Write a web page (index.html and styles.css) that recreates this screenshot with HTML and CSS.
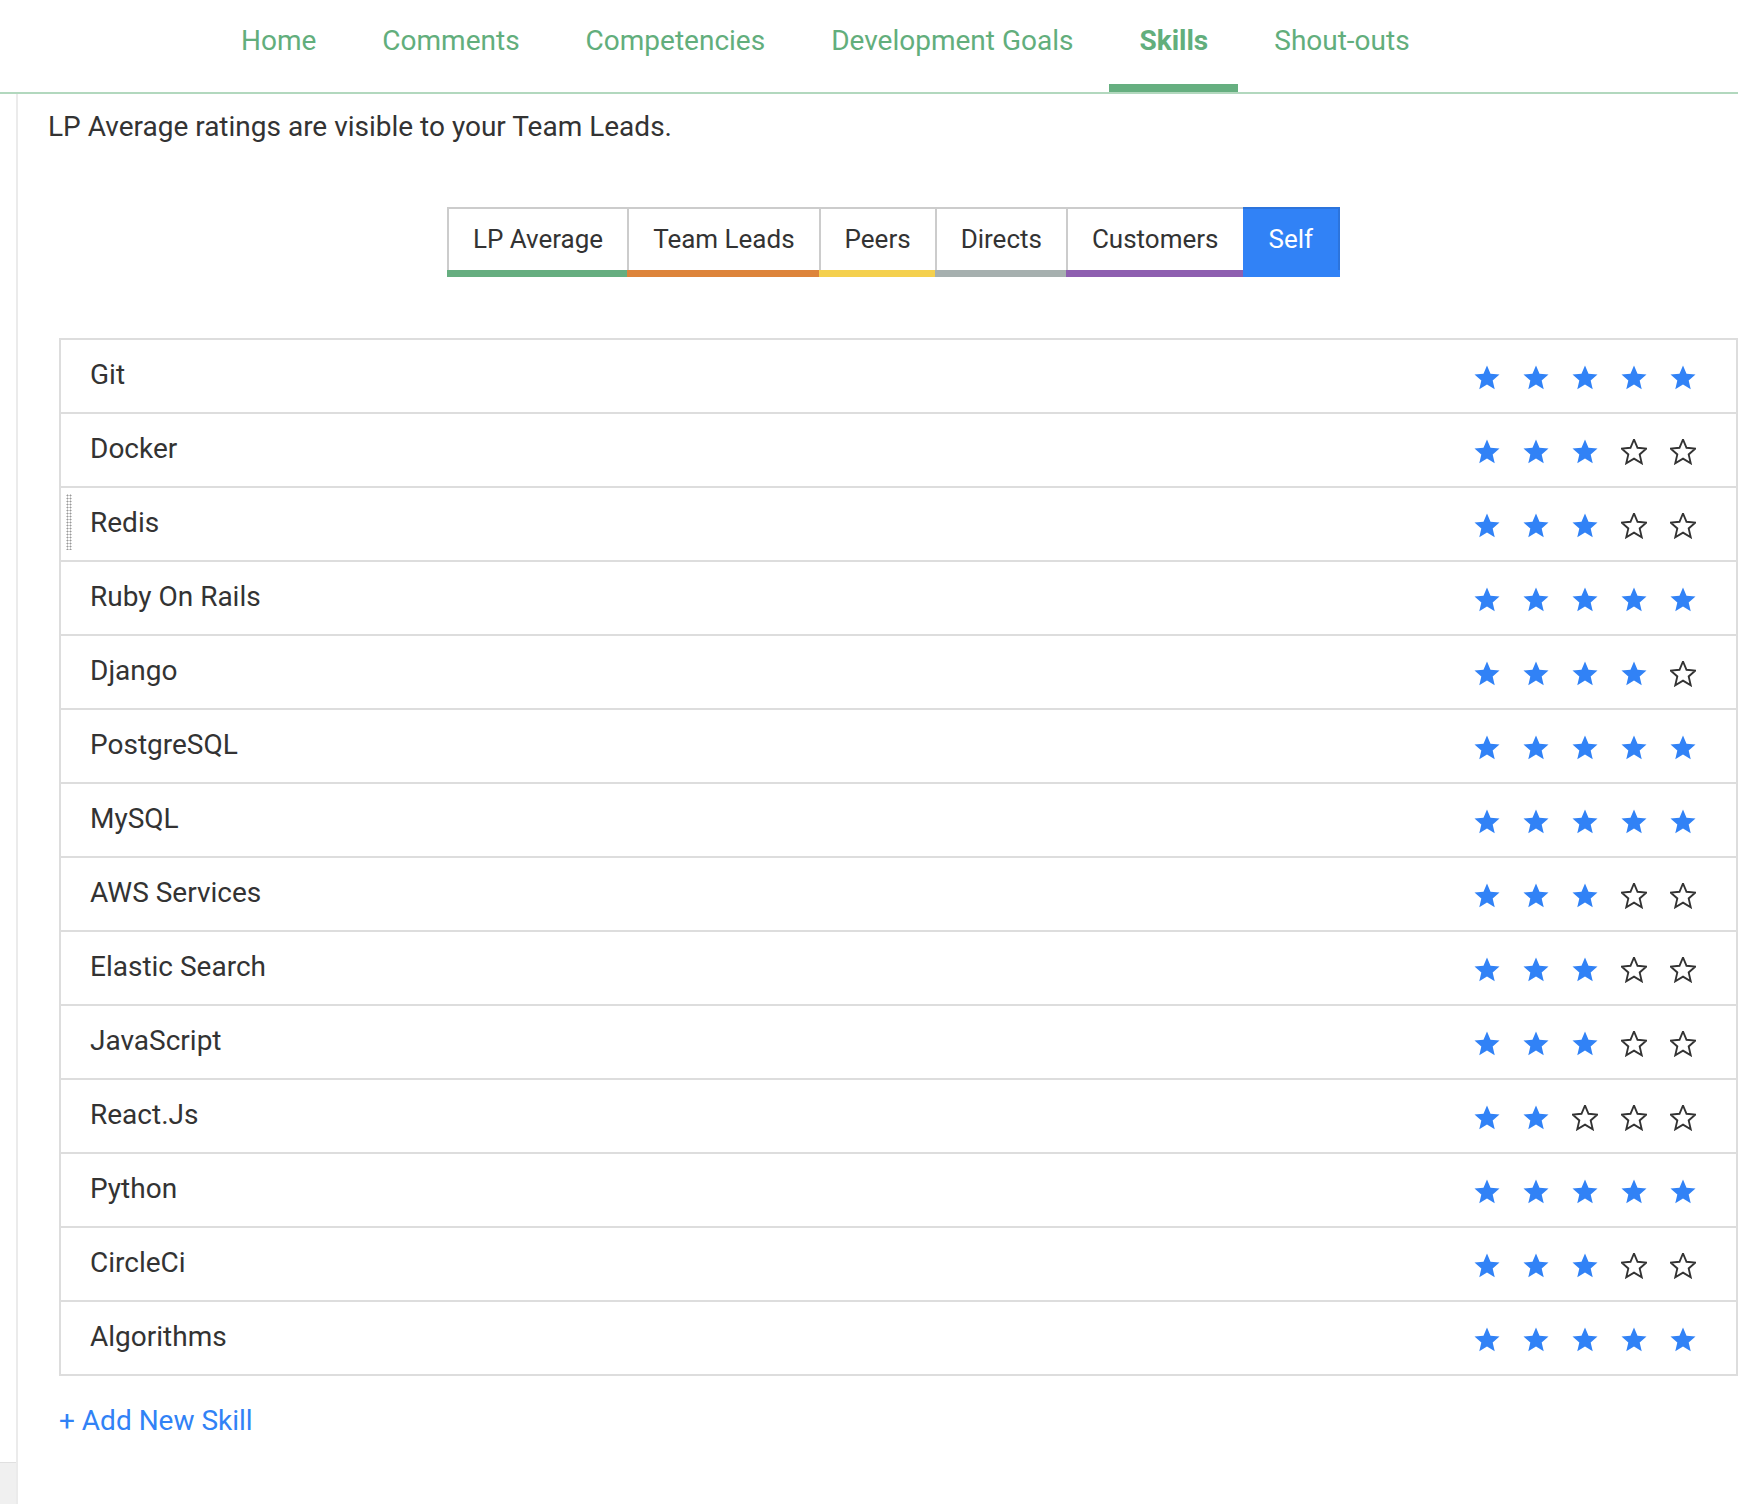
FILE: index.html
```html
<!DOCTYPE html>
<html lang="en">
<head>
<meta charset="utf-8">
<title>Skills</title>
<link rel="stylesheet" href="styles.css">
</head>
<body>
<svg class="defs" width="0" height="0" aria-hidden="true">
  <symbol id="star-full" viewBox="1.6 1.6 20.8 20.8">
    <path d="M12 17.27L18.18 21l-1.64-7.03L22 9.24l-7.19-.61L12 2 9.19 8.63 2 9.24l5.46 4.73L5.82 21z" fill="#3182f6"/>
  </symbol>
  <symbol id="star-empty" viewBox="1.6 1.6 20.8 20.8">
    <path d="M12 17.27L18.18 21l-1.64-7.03L22 9.24l-7.19-.61L12 2 9.19 8.63 2 9.24l5.46 4.73L5.82 21z" fill="none" stroke="#333" stroke-width="1.5" stroke-linejoin="miter"/>
  </symbol>
</svg>

<header class="topnav">
  <nav class="navlist">
    <a class="navitem">Home</a>
    <a class="navitem">Comments</a>
    <a class="navitem">Competencies</a>
    <a class="navitem">Development Goals</a>
    <a class="navitem active">Skills</a>
    <a class="navitem">Shout-outs</a>
  </nav>
</header>

<div class="page">
  <aside class="rail">
    <div class="rail-fill"></div>
    <div class="rail-foot"></div>
  </aside>
  <main class="content">
    <p class="notice">LP Average ratings are visible to your Team Leads.</p>
    <div class="board">
      <div class="seg-wrap">
        <div class="seg">
          <div class="seg-tab c-green"><span class="seg-label">LP Average</span><span class="seg-bar"></span></div>
          <div class="seg-tab c-orange"><span class="seg-label">Team Leads</span><span class="seg-bar"></span></div>
          <div class="seg-tab c-yellow"><span class="seg-label">Peers</span><span class="seg-bar"></span></div>
          <div class="seg-tab c-gray"><span class="seg-label">Directs</span><span class="seg-bar"></span></div>
          <div class="seg-tab c-purple"><span class="seg-label">Customers</span><span class="seg-bar"></span></div>
          <div class="seg-tab self"><span class="seg-label">Self</span><span class="seg-bar"></span></div>
        </div>
      </div>

      <div class="skills" id="skills"></div>

      <a class="add">+ Add New Skill</a>
    </div>
  </main>
</div>
<script src="app.js"></script>
</body>
</html>
```

FILE: app.js
```js
(function () {
  var data = [
    ["Git", 5], ["Docker", 3], ["Redis", 3], ["Ruby On Rails", 5],
    ["Django", 4], ["PostgreSQL", 5], ["MySQL", 5], ["AWS Services", 3],
    ["Elastic Search", 3], ["JavaScript", 3], ["React.Js", 2], ["Python", 5],
    ["CircleCi", 3], ["Algorithms", 5]
  ];
  var host = document.getElementById("skills");
  var html = "";
  data.forEach(function (d, i) {
    var stars = "";
    for (var s = 1; s <= 5; s++) {
      stars += '<svg class="star" width="26" height="26"><use href="#' + (s <= d[1] ? "star-full" : "star-empty") + '"/></svg>';
    }
    html += '<div class="skill-row">' +
      (i === 2 ? '<span class="drag"></span>' : '') +
      '<span class="skill-name">' + d[0] + '</span>' +
      '<span class="stars">' + stars + '</span></div>';
  });
  host.innerHTML = html;
})();
```

FILE: styles.css
```css
* { box-sizing: border-box; }
html, body { margin: 0; padding: 0; }
body {
  font-family: Roboto, "Noto Sans", "Liberation Sans", sans-serif;
  color: #333;
  background: #fff;
  width: 1738px;
  overflow: hidden;
}
.defs { position: absolute; width: 0; height: 0; overflow: hidden; }

.topnav {
  height: 94px;
  border-bottom: 2px solid #b2d8be;
}
.navlist {
  display: flex;
  gap: 6px;
  padding-left: 211px;
  height: 92px;
}
.navitem {
  display: block;
  padding: 0 30px;
  font-size: 28px;
  line-height: 82px;
  color: #62ae7c;
  height: 92px;
  border-bottom: 8px solid transparent;
}
.navitem.active {
  font-weight: 700;
  border-bottom-color: #66af80;
}

.page {
  display: flex;
  min-height: 1410px;
}
.rail {
  width: 18px;
  border-right: 2px solid #ebebeb;
  display: flex;
  flex-direction: column;
}
.rail-fill { flex: 1; }
.rail-foot {
  height: 42px;
  background: #f0f0f0;
  border-top: 1px solid #e0e0e0;
}
.content {
  flex: 1;
}
.notice {
  margin: 17px 0 0 30px;
  font-size: 28px;
  line-height: 32px;
}
.board {
  margin-left: 41px;
}
.seg-wrap {
  display: flex;
  justify-content: center;
  margin-top: 64px;
  padding-right: 10px;
}
.seg {
  display: flex;
  height: 70px;
}
.seg-tab {
  display: flex;
  flex-direction: column;
}
.seg-label {
  height: 63px;
  border-top: 2px solid #cccccc;
  border-left: 2px solid #cccccc;
  padding: 0 24px;
  font-size: 26px;
  line-height: 61px;
  color: #333;
  white-space: nowrap;
}
.seg-bar { height: 7px; }
.c-green .seg-bar { background: #66ae80; }
.c-orange .seg-bar { background: #dd843b; }
.c-yellow .seg-bar { background: #f4d04e; }
.c-gray .seg-bar { background: #a6b0af; }
.c-purple .seg-bar { background: #8e5fb0; }
.seg-tab.self { background: #3182f6; }
.seg-tab.self .seg-label {
  border-color: #2c74dc;
  border-left: 0;
  border-right: 2px solid #2c74dc;
  color: #fff;
  padding: 0 25px 0 26px;
}
.seg-tab.self .seg-bar { background: #3182f6; }

.skills {
  margin-top: 61px;
  border: 2px solid #dddddd;
}
.skill-row {
  position: relative;
  display: flex;
  align-items: center;
  justify-content: space-between;
  height: 74px;
  padding: 0 40px 0 29px;
  border-bottom: 2px solid #dddddd;
}
.skill-row:last-child {
  height: 72px;
  border-bottom: 0;
}
.skill-name {
  font-size: 28px;
  line-height: 32px;
  color: #333;
  margin-top: -2px;
}
.stars {
  display: flex;
  gap: 23px;
  margin-top: 4px;
}
.star { display: block; }
.drag {
  position: absolute;
  left: 5px;
  top: 6px;
  width: 6px;
  height: 56px;
  background-image: radial-gradient(circle, #999 0.9px, transparent 1.1px);
  background-size: 3px 3px;
}
.add {
  display: inline-block;
  margin-top: 29px;
  font-size: 28px;
  line-height: 32px;
  color: #3182f6;
}
```
